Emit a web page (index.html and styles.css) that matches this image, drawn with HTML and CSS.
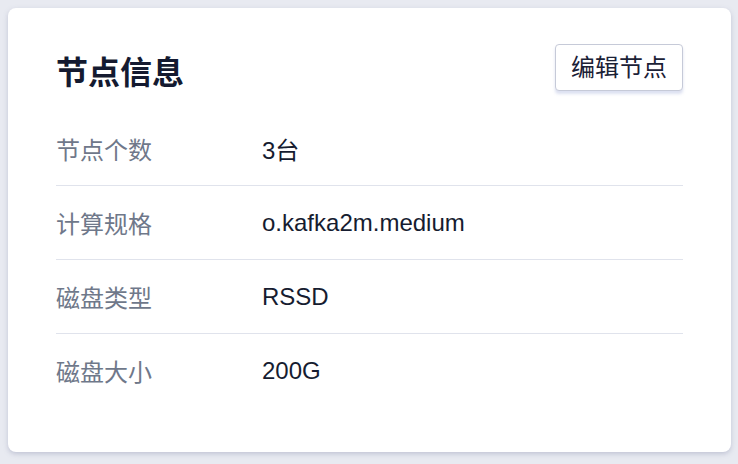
FILE: index.html
```html
<!DOCTYPE html>
<html lang="zh">
<head>
<meta charset="utf-8">
<title>节点信息</title>
<link rel="stylesheet" href="styles.css">
</head>
<body>
<section class="card">
  <header class="card-header">
    <h2 class="card-title">节点信息</h2>
    <button class="btn" type="button">编辑节点</button>
  </header>
  <dl class="info-list">
    <div class="info-row"><dt>节点个数</dt><dd>3台</dd></div>
    <div class="info-row"><dt>计算规格</dt><dd>o.kafka2m.medium</dd></div>
    <div class="info-row"><dt>磁盘类型</dt><dd>RSSD</dd></div>
    <div class="info-row"><dt>磁盘大小</dt><dd>200G</dd></div>
  </dl>
</section>
</body>
</html>
```

FILE: styles.css
```css
html, body {
  margin: 0;
  padding: 0;
}
body {
  background: #e8eaf1;
  font-family: "Liberation Sans", "Noto Sans CJK SC", sans-serif;
  padding: 8px 7px 12px 8px;
  box-sizing: border-box;
  height: 464px;
}
.card {
  background: #ffffff;
  border-radius: 8px;
  box-shadow: 0 2px 5px rgba(120, 126, 160, 0.35);
  padding: 36px 48px 45px 48px;
  height: 444px;
  box-sizing: border-box;
}
.card-header {
  display: flex;
  justify-content: space-between;
  align-items: flex-start;
}
.card-title {
  margin: 9px 0 0 0;
  font-size: 32px;
  line-height: 40px;
  font-weight: 700;
  color: #141a30;
}
.btn {
  font-family: inherit;
  font-size: 24px;
  line-height: 33px;
  height: 47px;
  padding: 0 15px;
  background: #ffffff;
  color: #1b2136;
  border: 1px solid #c6cad8;
  border-radius: 4px;
  box-shadow: 0 3px 3px rgba(120, 135, 200, 0.25);
  cursor: pointer;
}
.info-list {
  margin: 19px 0 0 0;
  padding: 0;
}
.info-row {
  display: flex;
  align-items: center;
  height: 73px;
  border-bottom: 1px solid #e0e3ec;
}
.info-row:last-child {
  border-bottom: none;
}
.info-row dt {
  width: 206px;
  flex: none;
  font-size: 24px;
  color: #6f788a;
}
.info-row dd {
  margin: 0;
  font-size: 24px;
  color: #161c30;
}
```
